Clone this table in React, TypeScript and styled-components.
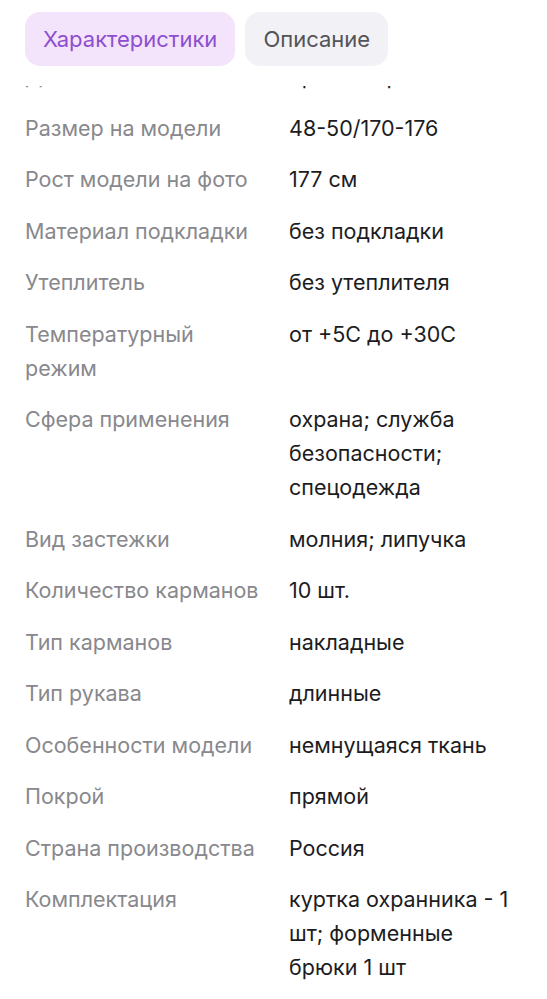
import React from "react";
import styled, { createGlobalStyle } from "styled-components";

const Global = createGlobalStyle`
  html, body { margin: 0; padding: 0; background: #ffffff; }
  body { font-family: Inter, "Noto Sans", sans-serif; -webkit-font-smoothing: antialiased; }
`;

const Page = styled.div`
  width: 547px;
  height: 999px;
  overflow: hidden;
  background: #fff;
`;

const Tabs = styled.div`
  display: flex;
  gap: 10px;
  padding: 12px 25px 0;
`;

const Tab = styled.button<{ $active?: boolean }>`
  height: 54px;
  padding: 0 18px;
  border: none;
  border-radius: 15px;
  font-family: inherit;
  font-size: 22px;
  background: ${(p) => (p.$active ? "#f3e4fc" : "#f2f1f5")};
  color: ${(p) => (p.$active ? "#8d4fcf" : "#535358")};
`;

const Viewport = styled.div`
  margin-top: 20px;
  overflow: hidden;
`;

const List = styled.div`
  margin-top: -27px;
  padding: 0 14px 0 25px;
  display: flex;
  flex-direction: column;
  gap: 17.5px;
`;

const Row = styled.div`
  display: grid;
  grid-template-columns: 264px 1fr;
  font-size: 21.5px;
  line-height: 34px;
`;

const Label = styled.div`
  color: #88888d;
  padding-right: 22px;
`;

const Value = styled.div`
  color: #1c1c1e;
  max-width: 238px;
`;

const rows: [string, string][] = [
  ["Длина", "прямой крой"],
  ["Размер на модели", "48-50/170-176"],
  ["Рост модели на фото", "177 см"],
  ["Материал подкладки", "без подкладки"],
  ["Утеплитель", "без утеплителя"],
  ["Температурный режим", "от +5С до +30С"],
  ["Сфера применения", "охрана; служба безопасности; спецодежда"],
  ["Вид застежки", "молния; липучка"],
  ["Количество карманов", "10 шт."],
  ["Тип карманов", "накладные"],
  ["Тип рукава", "длинные"],
  ["Особенности модели", "немнущаяся ткань"],
  ["Покрой", "прямой"],
  ["Страна производства", "Россия"],
  ["Комплектация", "куртка охранника - 1 шт; форменные брюки 1 шт"],
];

export default function App() {
  return (
    <Page>
      <Global />
      <Tabs>
        <Tab $active>Характеристики</Tab>
        <Tab>Описание</Tab>
      </Tabs>
      <Viewport>
        <List>
          {rows.map(([l, v]) => (
            <Row key={l}>
              <Label>{l}</Label>
              <Value>{v}</Value>
            </Row>
          ))}
        </List>
      </Viewport>
    </Page>
  );
}
